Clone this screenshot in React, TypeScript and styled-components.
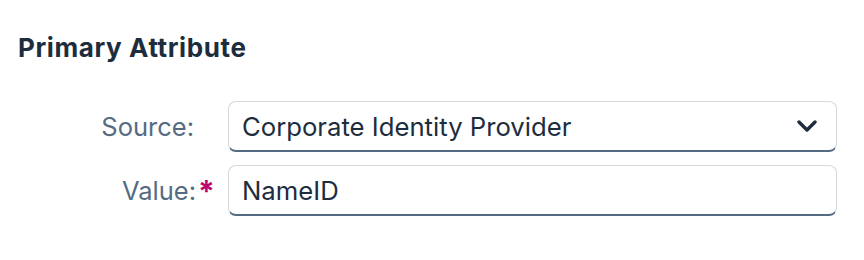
import React from "react";
import styled, { createGlobalStyle } from "styled-components";

const GlobalStyle = createGlobalStyle`
  html, body {
    margin: 0;
    padding: 0;
    background: #ffffff;
    font-family: "Inter", "Liberation Sans", sans-serif;
  }
`;

const Panel = styled.section`
  display: flex;
  flex-direction: column;
  padding: 32px 27px 0 18px;
`;

const Heading = styled.h2`
  margin: 0 0 37px 0;
  font-size: 26px;
  line-height: 32px;
  font-weight: 700;
  letter-spacing: 0.6px;
  color: #1d2d3e;
`;

const Form = styled.div`
  display: grid;
  grid-template-columns: 194px 1fr;
  column-gap: 16px;
  row-gap: 13px;
  align-items: center;
`;

const Label = styled.label<{ $required?: boolean }>`
  display: flex;
  justify-content: flex-end;
  align-items: center;
  padding-right: ${(p) => (p.$required ? 0 : 18)}px;
  font-size: 25.5px;
  color: #556b82;
`;

const Asterisk = styled.span`
  width: 16px;
  padding-left: 2px;
  box-sizing: border-box;
  font-size: 30px;
  line-height: 1;
  font-weight: 700;
  color: #ba066c;
  text-align: left;
`;

const Field = styled.div`
  display: flex;
  align-items: center;
  height: 51px;
  box-sizing: border-box;
  padding: 0 19px 0 13px;
  background: #ffffff;
  border: 1px solid #d5dadf;
  border-bottom: 2px solid #556b82;
  border-radius: 8px;
  font-size: 25.7px;
  color: #1d2d3e;
`;

const FieldText = styled.span`
  flex: 1;
`;

const Chevron = () => (
  <svg width="20" height="12" viewBox="0 0 20 12" fill="none">
    <polyline
      points="2,2 10,10 18,2"
      stroke="#1d2d3e"
      strokeWidth="3.4"
      strokeLinecap="round"
      strokeLinejoin="round"
    />
  </svg>
);

const App: React.FC = () => {
  return (
    <>
      <GlobalStyle />
      <Panel>
        <Heading>Primary Attribute</Heading>
        <Form>
          <Label>Source:</Label>
          <Field>
            <FieldText>Corporate Identity Provider</FieldText>
            <Chevron />
          </Field>
          <Label $required>
            Value:<Asterisk>*</Asterisk>
          </Label>
          <Field>
            <FieldText>NameID</FieldText>
          </Field>
        </Form>
      </Panel>
    </>
  );
};

export default App;
